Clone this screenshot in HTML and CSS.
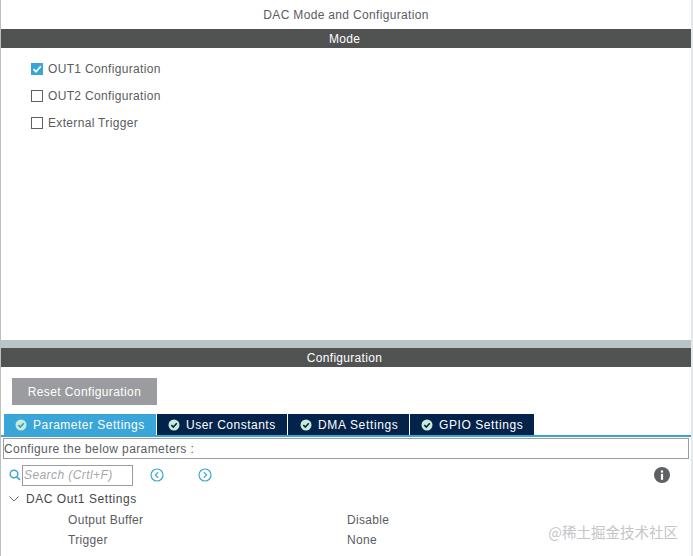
FILE: index.html
```html
<!DOCTYPE html>
<html lang="en">
<head>
<meta charset="utf-8">
<title>DAC Mode and Configuration</title>
<link rel="stylesheet" href="styles.css">
</head>
<body>
<div class="app">
  <div class="title">DAC Mode and Configuration</div>
  <div class="band">Mode</div>
  <section class="mode">
    <label class="check"><span class="box on"><svg viewBox="0 0 12 12" width="12" height="12"><path d="M2.5 6.2 5 8.8 9.8 3.2" fill="none" stroke="#fff" stroke-width="1.7"/></svg></span>OUT1 Configuration</label>
    <label class="check"><span class="box"></span>OUT2 Configuration</label>
    <label class="check"><span class="box"></span>External Trigger</label>
  </section>
  <div class="splitter"></div>
  <div class="band">Configuration</div>
  <section class="config">
    <button class="reset">Reset Configuration</button>
    <div class="tabs">
      <div class="tab active"><svg class="ok" viewBox="0 0 12 12" width="12" height="12"><circle cx="6" cy="6" r="5.5" fill="#c9ead8"/><path d="M3.3 6 5.3 8 8.8 4.3" fill="none" stroke="#2f9fd0" stroke-width="1.6"/></svg>Parameter Settings</div>
      <div class="tab w1"><svg class="ok" viewBox="0 0 12 12" width="12" height="12"><circle cx="6" cy="6" r="5.5" fill="#c9ead8"/><path d="M3.3 6 5.3 8 8.8 4.3" fill="none" stroke="#03234b" stroke-width="1.6"/></svg>User Constants</div>
      <div class="tab w2"><svg class="ok" viewBox="0 0 12 12" width="12" height="12"><circle cx="6" cy="6" r="5.5" fill="#c9ead8"/><path d="M3.3 6 5.3 8 8.8 4.3" fill="none" stroke="#03234b" stroke-width="1.6"/></svg>DMA Settings</div>
      <div class="tab w3"><svg class="ok" viewBox="0 0 12 12" width="12" height="12"><circle cx="6" cy="6" r="5.5" fill="#c9ead8"/><path d="M3.3 6 5.3 8 8.8 4.3" fill="none" stroke="#03234b" stroke-width="1.6"/></svg>GPIO Settings</div>
    </div>
    <div class="hint">Configure the below parameters :</div>
    <div class="search">
      <svg class="glass" viewBox="0 0 12 12" width="12" height="12"><circle cx="5" cy="5" r="3.8" fill="none" stroke="#3ea6d2" stroke-width="1.5"/><path d="M7.8 7.8 11 11" stroke="#3ea6d2" stroke-width="1.7"/></svg>
      <div class="field">Search (Crtl+F)</div>
      <svg class="nav first" viewBox="0 0 14 14" width="14" height="14"><circle cx="7" cy="7" r="6" fill="none" stroke="#3ea6d2" stroke-width="1.2"/><path d="M8.2 4.2 5.4 7l2.8 2.8" fill="none" stroke="#3ea6d2" stroke-width="1.2"/></svg>
      <svg class="nav second" viewBox="0 0 14 14" width="14" height="14"><circle cx="7" cy="7" r="6" fill="none" stroke="#3ea6d2" stroke-width="1.2"/><path d="M5.8 4.2 8.6 7l-2.8 2.8" fill="none" stroke="#3ea6d2" stroke-width="1.2"/></svg>
      <svg class="info" viewBox="0 0 16 16" width="16" height="16"><circle cx="8" cy="8" r="8" fill="#5f6062"/><rect x="6.9" y="6.8" width="2.2" height="6" fill="#fff"/><rect x="6.9" y="3.4" width="2.2" height="2.2" fill="#fff"/></svg>
    </div>
    <div class="group"><svg viewBox="0 0 10 6" width="10" height="6"><path d="M.5.5 5 5 9.5.5" fill="none" stroke="#6b6d70" stroke-width="1"/></svg>DAC Out1 Settings</div>
    <div class="row"><span class="name">Output Buffer</span><span>Disable</span></div>
    <div class="row"><span class="name">Trigger</span><span>None</span></div>
    <div class="mark">@稀土掘金技术社区</div>
  </section>
</div>
</body>
</html>
```

FILE: styles.css
```css
* { box-sizing: border-box; }
html, body { margin: 0; height: 100%; }
body { background: #fff; overflow: hidden; }
.app {
  width: 693px; height: 556px;
  border-left: 1px solid #b9c0c0;
  border-right: 2px solid #e4e8e9;
  font: 12px/16px "Liberation Sans", Arial, sans-serif;
  letter-spacing: .33px;
  color: #5a5c5f;
  display: flex; flex-direction: column;
}
.title { height: 29px; padding-top: 7px; text-align: center; }
.band {
  height: 19px; background: #515353; color: #fff;
  text-align: center; line-height: 20px;
  padding-right: 3px; letter-spacing: .3px;
}
.mode { height: 292px; padding-top: 7px; padding-left: 30px; display: flex; flex-direction: column; }
.check { height: 27px; display: flex; align-items: center; gap: 5px; }
.box { width: 12px; height: 12px; border: 1px solid #5f6062; display: block; }
.box.on { border: 0; background: #37a5d8; }
.box svg { display: block; }
.splitter { height: 8px; background: #b9c4c4; }
.config { flex: 1; position: relative; padding-top: 11px; }
.reset {
  display: block; margin-left: 11px; width: 145px; height: 27px; padding: 0;
  border: 0; background: #9a9c9f; color: #fff;
  font: inherit; letter-spacing: .39px;
}
.tabs {
  display: flex; margin-top: 9px; padding-left: 3px;
  border-bottom: 2px solid #3aa5d4;
  box-sizing: content-box; height: 21px;
}
.tab {
  height: 21px; display: flex; align-items: center; gap: 6px;
  padding-left: 11px; background: #03234b; color: #fff;
  letter-spacing: .5px; border-right: 1px solid #fff;
}
.tab.active { width: 153px; background: #39a5d8; }
.tab.w1 { width: 131px; padding-left: 11px; }
.tab.w2 { width: 122px; padding-left: 12px; letter-spacing: .65px; }
.tab.w3 { width: 124px; padding-left: 11px; border-right: 0; letter-spacing: .58px; }
.ok { flex: none; }
.hint {
  margin: 1px 2px 0 2px; height: 21px;
  border: 1px solid #9a9c9f;
  line-height: 20px; letter-spacing: .4px;
}
.search { height: 30px; padding-top: 2px; display: flex; align-items: center; padding-left: 8px; position: relative; }
.field {
  margin-left: 1px; width: 111px; height: 21px; border: 1px solid #9a9c9f;
  padding-left: 1px; line-height: 19px; font-style: italic; color: #a5a7a9; letter-spacing: .42px;
}
.nav.first { margin-left: 17px; }
.nav.second { margin-left: 34px; }
.info { position: absolute; right: 21px; top: 8px; }
.group { height: 20px; margin-bottom: 1px; display: flex; align-items: center; gap: 7px; padding-left: 8px; color: #45474a; letter-spacing: .55px; }
.row { height: 20px; display: flex; align-items: center; padding-left: 67px; }
.name { width: 279px; flex: none; }
.mark {
  position: absolute; right: 13px; bottom: 15px;
  font: 14.5px/18px "Noto Sans CJK SC", "Liberation Sans", sans-serif;
  letter-spacing: 0; color: #c3c5c7;
}
```
